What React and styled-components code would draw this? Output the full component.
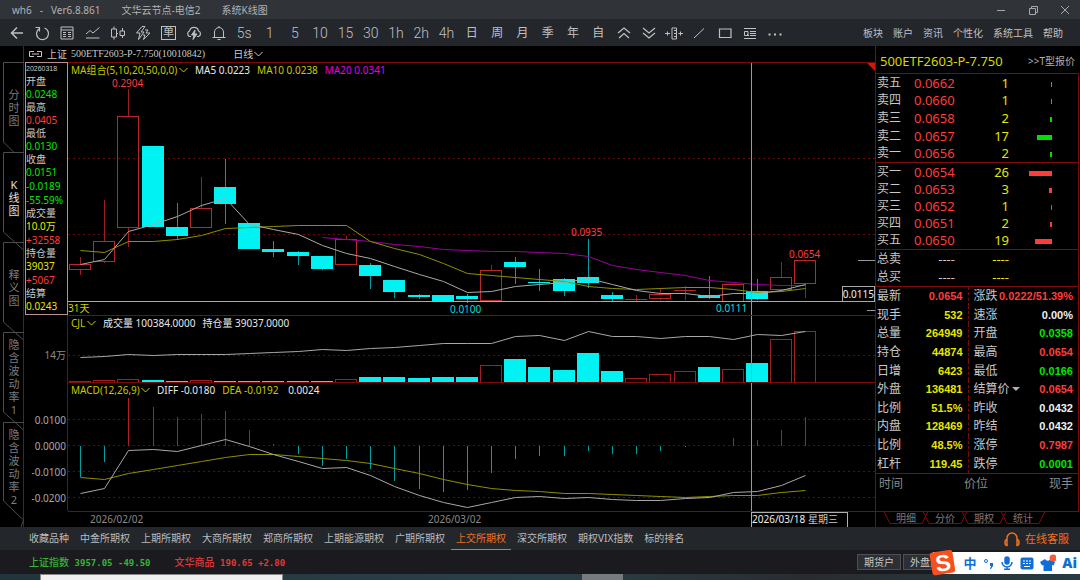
import styled, { createGlobalStyle } from "styled-components"

const c = {
  red: "#ff3c3c",
  line: "#7d0a0a",
  green: "#00e600",
  cyan: "#00f2f2",
  yellow: "#e6e600",
  text: "#c8c8c8",
  dim: "#8a8a8a",
  orange: "#f07020",
  blue: "#0f6fd6",
}

const tools = [
  "back", "refresh", "table", "trend", "candle", "flash", "order", "cloud", "bell",
  "5s", "1", "5", "10", "15", "30", "1h", "2h", "4h",
  "日", "周", "月", "季", "年", "自",
  "up", "down", "adjust", "slash", "rect", "search", "more",
]

const menus = ["板块", "账户", "资讯", "个性化", "系统工具", "帮助"]
const views = ["分时图", "K线图", "释义图", "隐含波动率1", "隐含波动率2"]
const markets = [
  "收藏品种", "中金所期权", "上期所期权", "大商所期权", "郑商所期权", "上期能源期权",
  "广期所期权", "上交所期权", "深交所期权", "期权VIX指数", "标的排名",
]

const dayInfo = [
  ["开盘"], ["0.0248", c.green], ["最高"], ["0.0405", c.red], ["最低"], ["0.0130", c.green],
  ["收盘"], ["0.0151", c.green], ["-0.0189", c.green], ["-55.59%", c.green],
  ["成交量"], ["10.0万", c.yellow], ["+32558", c.red],
  ["持仓量"], ["39037", c.yellow], ["+5067", c.red], ["结算"], ["0.0243", c.yellow],
]

// kind (r = rising, f = falling, t = thin rising), body top, body bottom, high, low
const candles = [
  ["r", 264, 269, 257, 275], ["r", 241, 261, 200, 263], ["r", 116, 227, 89, 247],
  ["f", 146, 227, 146, 227], ["f", 227, 236, 203, 240], ["r", 208, 227, 177, 228],
  ["f", 187, 204, 159, 224], ["f", 223, 249, 223, 249], ["f", 249, 252, 241, 257],
  ["f", 252, 256, 251, 265], ["f", 256, 269, 256, 270], ["r", 239, 264, 236, 264],
  ["f", 265, 276, 263, 289], ["f", 280, 292, 280, 298], ["f", 295, 297, 294, 299],
  ["f", 295, 301, 295, 302], ["f", 296, 299, 294, 303], ["r", 270, 300, 265, 301],
  ["f", 262, 267, 257, 284], ["f", 282, 283, 269, 291], ["f", 279, 291, 278, 296],
  ["f", 277, 283, 239, 288], ["f", 295, 299, 292, 301], ["t", 299, 300, 295, 301],
  ["r", 294, 298, 288, 300], ["t", 290, 291, 286, 300], ["f", 295, 298, 276, 299],
  ["r", 284, 301, 284, 301], ["f", 291, 299, 279, 300], ["r", 277, 289, 262, 292],
  ["r", 260, 283, 260, 298],
]
const ma5 = [264, 259, 231, 224, 216, 205, 198, 224, 229, 234, 245, 253, 258, 266, 274, 281, 292, 291, 286, 284, 282, 278, 284, 290, 293, 293, 296, 293, 293, 290, 284]
const ma10 = [250, 252, 241, 241, 239, 235, 228, 227, 226, 225, 225, 225, 241, 248, 254, 263, 273, 275, 277, 279, 281, 286, 288, 289, 288, 287, 287, 289, 292, 291, 288]
const ma20 = [237, 239, 241, 244, 246, 249, 250, 251, 251, 252, 253, 256, 265, 269, 272, 275, 280, 282, 284, 285, 285]

const volume = [381, 380, 379, 380, 381, 380, 381, 381, 381, 381, 381, 379, 377, 377, 378, 377, 377, 365, 359, 367, 370, 353, 371, 378, 374, 371, 367, 369, 363, 339, 331]
const openInterest = [357, 356, 354, 355, 354, 354, 354, 353, 352, 351, 349, 350, 348, 347, 345, 343, 343, 343, 336, 335, 340, 331, 336, 336, 338, 336, 336, 339, 334, 335, 331]

const macd = [477, 462, 398, 407, 417, 414, 411, 430, 444, 454, 466, 459, 469, 481, 489, 492, 490, 473, 459, 456, 456, 451, 454, 454, 451, 447, 446, 438, 440, 430, 417]
const diff = [493, 488, 450, 449, 451, 445, 439, 446, 454, 461, 468, 467, 475, 486, 495, 502, 507, 502, 497, 496, 498, 497, 499, 500, 500, 498, 497, 492, 491, 485, 475]
const dea = [477, 479, 473, 469, 465, 461, 457, 454, 454, 456, 458, 460, 463, 468, 473, 479, 484, 488, 490, 491, 493, 493, 494, 495, 496, 497, 496, 495, 495, 492, 490]

const asks = [["卖五", "0.0662", 1], ["卖四", "0.0660", 1], ["卖三", "0.0658", 2], ["卖二", "0.0657", 17], ["卖一", "0.0656", 2]]
const bids = [["买一", "0.0654", 26], ["买二", "0.0653", 3], ["买三", "0.0652", 1], ["买四", "0.0651", 2], ["买五", "0.0650", 19]]

const quotes = [
  ["最新", "0.0654", c.red, "涨跌", "0.0222/51.39%", c.red],
  ["现手", "532", c.yellow, "速涨", "0.00%", "#f0f0f0"],
  ["总量", "264949", c.yellow, "开盘", "0.0358", c.green],
  ["持仓", "44874", c.yellow, "最高", "0.0654", c.red],
  ["日增", "6423", c.yellow, "最低", "0.0166", c.green],
  ["外盘", "136481", c.yellow, "结算价", "0.0654", c.red],
  ["比例", "51.5%", c.yellow, "昨收", "0.0432", "#f0f0f0"],
  ["内盘", "128469", c.yellow, "昨结", "0.0432", "#f0f0f0"],
  ["比例", "48.5%", c.yellow, "涨停", "0.7987", c.red],
  ["杠杆", "119.45", c.yellow, "跌停", "0.0001", c.green],
]

const STEP = 24.18
const CURSOR = 683
const cx = (i) => Math.round(12 + i * STEP)
const points = (list, from = 0) => list.map((y, i) => `${cx(i + from) + 0.5},${y + 0.5}`).join(" ")

const toolIcons = {
  back: <path d="M14 8H2.500M8 2.500L2.500 8L8 13.500" strokeWidth="1.500" />,
  refresh: <path d="M5.500 3.500A6 6 0 1 0 10.500 3M1.500 2.500H5.500V6.500" strokeWidth="1.200" />,
  table: <path d="M2 2H14V14H2ZM2 5H14M4 7.500H7M9 7.500H12M4 9.500H7M9 9.500H12M4 11.500H7M9 11.500H12" />,
  trend: <path d="M1 9L5 5.500L8 8L14.500 2.500M1 13H14.500" />,
  candle: <path d="M1.500 4H6.500V12H1.500ZM4 1.500V4M4 12V14.500M10 6H14.500V10.500H10ZM12.500 3V6M12.500 10.500V13M6.500 8.500H8" />,
  flash: <path d="M7 1.500L1.500 8H5L3.500 14.500L9 7H6L10 1.500ZM10 5H13L11 8H15L8.500 14.500L10 10H8" />,
  cloud: (
    <>
      <path d="M5 11.500H3.500A3 3 0 0 1 3.500 6A4.600 4.600 0 0 1 12.500 6A2.900 2.900 0 0 1 12.500 11.500H11" strokeWidth="1.200" />
      <path d="M9 5L5.500 10H8L7 14.500L11 9H8.500Z" fill="currentColor" />
    </>
  ),
  bell: <path d="M3.500 12V7A4.500 4.500 0 0 1 12.500 7V12M1.500 12.500H14.500M6.500 14.500H9.500M8 1V2.500" />,
  up: <path d="M2 8L8 3L14 8M3 13L8 8.500L13 13" strokeWidth="1.200" />,
  down: <path d="M2 3L8 8L14 3M2 8L8 13L14 8" strokeWidth="1.200" />,
  adjust: <path d="M6 3H10.500V14H6ZM8 5.500H10M8 8.500H10M8 11.500H10M-1 8.500H4M12.500 8.500H17M1.500 6.500V10.500M14.500 6.500V10.500" />,
  slash: <path d="M3 13L13 3.500" />,
  rect: <path d="M2.500 4H14V12.500H2.500Z" strokeWidth="1.200" />,
  search: <path d="M2 3.500H14M8 6.500H14M8 8.500H14M8 10.500H14M2 13.500H14M2.500 6.500H6V10.500H2.500ZM5 9L7 11" />,
  more: <path d="M1.500 9.500H3.500M7 9.500H9M12.500 9.500H14.500" strokeWidth="2" />,
}

const Chevron = () => (
  <svg width="9" height="6" viewBox="0 0 9 6" fill="none" stroke="currentColor">
    <path d="M0.500 1L4.500 5L8.500 1" />
  </svg>
)

const DropDown = ({ label, children }) => (
  <StyledDropDown>
    <select aria-label={label}>
      <option>{label}</option>
    </select>
    {children || <Chevron />}
  </StyledDropDown>
)

const Toolbar = () => (
  <StyledToolbar>
    <div className="tools">
      {tools.map((name) => (
        <ToolButton key={name} aria-label={name} $cjk={name > "z"}>
          {name === "order" ? (
            <span className="framed">单</span>
          ) : toolIcons[name] ? (
            <svg width="16" height="16" viewBox="0 0 16 16" fill="none" stroke="currentColor" overflow="visible">
              {toolIcons[name]}
            </svg>
          ) : (
            name
          )}
        </ToolButton>
      ))}
    </div>
    <nav>
      {menus.map((name) => <a href="#menu" key={name}>{name}</a>)}
    </nav>
  </StyledToolbar>
)

const Rail = () => (
  <StyledRail>
    {views.map((name, i) => (
      <RailTab key={name} $active={i === 1} $last={i === 4}>
        <svg width="24" height="110" fill="none" stroke="#4c4c4c">
          <path d={i === 4 ? "M24 0.500H3.500V79L23.500 98L21 105" : i === 0 ? "M24 0.500H3.500V80L14 90.500" : "M24 0.500H3.500V80L23.500 98"} />
        </svg>
        {name.split("").map((ch, n) => <span key={n}>{ch}</span>)}
      </RailTab>
    ))}
  </StyledRail>
)

// y values in the data run from the top of the window, so each plot shifts them by its own start
const Plot = ({ top, height, grid, children }) => (
  <svg width="100%" height={height} shapeRendering="crispEdges">
    <g transform={`translate(0 ${-top})`}>
      {grid.map((y) => (
        <line key={y} x1="0" x2="100%" y1={y + 0.5} y2={y + 0.5} stroke="#6a0808" strokeDasharray="2 3" />
      ))}
      {children}
      <line x1={CURSOR + 0.5} x2={CURSOR + 0.5} y1={top} y2={top + height} stroke="#989898" />
    </g>
  </svg>
)

const Line = ({ data, from, color }) => (
  <polyline points={points(data, from)} fill="none" stroke={color} shapeRendering="auto" />
)

const PricePane = () => (
  <Pane>
    <DayBox>
      <small>20260318</small>
      {dayInfo.map(([text, color], i) => <DayItem key={i} $color={color}>{text}</DayItem>)}
    </DayBox>
    <PlotCell>
      <Legend>
        <b><DropDown label="MA组合(5,10,20,50,0,0)" /></b>
        <LegendItem $color="#e8e8e8">MA5 0.0223</LegendItem>
        <LegendItem $color="#c8c800">MA10 0.0238</LegendItem>
        <LegendItem $color="#e000e0">MA20 0.0341</LegendItem>
      </Legend>
      <Plot top={63} height={252} grid={[158, 234]}>
        {candles.map(([kind, top, bottom, high, low], i) => {
          const color = kind === "f" ? c.cyan : "#b82828"
          const x = cx(i)
          return (
            <g key={i}>
              <path d={`M${x + 0.5} ${high}V${top}M${x + 0.5} ${bottom}V${low}`} stroke={kind === "f" ? "#00a0a0" : "#9a2020"} />
              {kind === "r" ? (
                <rect x={x - 10.5} y={top + 0.5} width="21" height={bottom - top} fill="none" stroke={color} />
              ) : (
                <rect x={x - 11} y={top} width="22" height={Math.max(bottom - top, 1)} fill={color} />
              )}
            </g>
          )
        })}
        <Line data={ma20} from={10} color="#9c009c" />
        <Line data={ma10} color="#8f8f00" />
        <Line data={ma5} color="#a8a8a8" />
        <line x1="0" x2="100%" y1="301.500" y2="301.500" stroke="#a8a8a8" />
        <rect x="100%" y="260" width="17" height="1" transform="translate(-17 0)" fill="#989898" />
        <rect x="100%" y="310" width="8" height="1" transform="translate(-8 0)" fill="#989898" />
        <ChartText x="44" y="87" $color={c.red}>0.2904</ChartText>
        <ChartText x="503" y="236" $color={c.red}>0.0935</ChartText>
        <ChartText x="721" y="258" $color={c.red}>0.0654</ChartText>
        <ChartText x="382" y="313" $color="#00dcdc">0.0100</ChartText>
        <ChartText x="648" y="312" $color="#00dcdc">0.0111</ChartText>
        <ChartText x="0" y="312" $color="#d0d000">31天</ChartText>
      </Plot>
      <Corner />
      <PriceTag>0.0115</PriceTag>
    </PlotCell>
  </Pane>
)

const VolumePane = () => (
  <Pane>
    <Gutter>
      <svg width="43" height="67">
        <ChartText x="42" y="44" textAnchor="end" $color={c.dim}>14万</ChartText>
      </svg>
    </Gutter>
    <PlotCell>
      <Legend>
        <b><DropDown label="CJL" /></b>
        <LegendItem $color="#e8e8e8">成交量 100384.0000</LegendItem>
        <LegendItem $color="#e8e8e8">持仓量 39037.0000</LegendItem>
      </Legend>
      <Plot top={316} height={66} grid={[355]}>
        {volume.map((y, i) => (
          candles[i][0] === "f"
            ? <rect key={i} x={cx(i) - 11} y={y} width="22" height={382 - y} fill={c.cyan} />
            : <rect key={i} x={cx(i) - 10.5} y={y + 0.5} width="21" height={383 - y} fill="none" stroke="#a02020" />
        ))}
        <Line data={openInterest} color="#a8a8a8" />
      </Plot>
    </PlotCell>
  </Pane>
)

const MacdPane = () => (
  <Pane>
    <Gutter>
      <svg width="43" height="129">
        {["0.0100", "0.0000", "-0.0100", "-0.0200"].map((text, i) => (
          <ChartText key={text} x="42" y={42 + i * 26} textAnchor="end" $color="#a8a8a8">{text}</ChartText>
        ))}
      </svg>
    </Gutter>
    <PlotCell>
      <Legend>
        <b><DropDown label="MACD(12,26,9)" /></b>
        <LegendItem $color="#e8e8e8">DIFF -0.0180</LegendItem>
        <LegendItem $color="#c8c800">DEA -0.0192</LegendItem>
        <LegendItem $color="#e8e8e8">&nbsp;0.0024</LegendItem>
      </Legend>
      <Plot top={383} height={128} grid={[419, 445, 471, 497]}>
        {macd.map((y, i) => (
          <line key={i} x1={cx(i) + 0.5} x2={cx(i) + 0.5} y1="446" y2={y} stroke={y > 446 ? "#00a0a0" : "#b02020"} />
        ))}
        <Line data={dea} color="#8f8f00" />
        <Line data={diff} color="#a8a8a8" />
      </Plot>
    </PlotCell>
  </Pane>
)

const DateAxis = () => (
  <Pane>
    <AxisGap />
    <PlotCell>
      <svg width="100%" height="15" shapeRendering="crispEdges">
        <ChartText x="22" y="11" $color={c.dim}>2026/02/02</ChartText>
        <ChartText x="360" y="11" $color={c.dim}>2026/03/02</ChartText>
        <path d={`M${CURSOR + 0.5} 15V0H${CURSOR + 96}V15`} fill="none" stroke="#b0b0b0" />
        <ChartText x={CURSOR + 1} y="11" $color="#f0f0f0">2026/03/18</ChartText>
        <ChartText x={CURSOR + 57} y="11" $color={c.text}>星期三</ChartText>
      </svg>
    </PlotCell>
  </Pane>
)

const OrderTable = ({ rows, color, height }) => (
  <Orders $height={height}>
    <tbody>
      {rows.map(([name, price, amount]) => (
        <tr key={name}>
          <th scope="row">{name}</th>
          <td className="price">{price}</td>
          <td className="amount">{amount}</td>
          <td className="depth"><Depth $color={color} style={{ width: Math.max(1, Math.round(amount * 0.88)) }} /></td>
        </tr>
      ))}
    </tbody>
  </Orders>
)

const QuotePanel = () => (
  <StyledQuotePanel>
    <QuoteTitle>
      <h1>500ETF2603-P-7.750</h1>
      <a href="#t-quote">&gt;&gt;T型报价</a>
    </QuoteTitle>
    <QuoteBody>
      <OrderTable rows={asks} color="#00e000" height="89px" />
      <OrderTable rows={bids} color={c.red} height="87px" />
      <Orders $height="37px">
        <tbody>
          {["总卖", "总买"].map((name) => (
            <tr key={name}>
              <th scope="row">{name}</th>
              <td className="total">----</td>
              <td className="amount">----</td>
              <td className="depth" />
            </tr>
          ))}
        </tbody>
      </Orders>
      <Details>
        <tbody>
          {quotes.map(([a, av, ac, b, bv, bc], i) => (
            <tr key={i}>
              <th scope="row">{a}</th>
              <Value $color={ac} $split>{av}</Value>
              <th scope="row" className="second">
                {b === "结算价" ? (
                  <DropDown label={b}>
                    <svg width="8" height="5"><path d="M0 0H8L4 4Z" fill="#b0b0b0" /></svg>
                  </DropDown>
                ) : b}
              </th>
              <Value $color={bc}>{bv}</Value>
            </tr>
          ))}
        </tbody>
      </Details>
      <DealHead>
        <span>时间</span>
        <span>价位</span>
        <span>现手</span>
      </DealHead>
    </QuoteBody>
    <DealTabs>
      {["明细", "分价", "期权", "统计"].map((name) => (
        <button key={name}>
          <svg width="44" height="13" fill="none" stroke={c.line}>
            <path d="M0 0.500L6 12.500H38L44 0.500" />
          </svg>
          {name}
        </button>
      ))}
    </DealTabs>
  </StyledQuotePanel>
)

const ImeBar = () => (
  <StyledImeBar>
    <svg className="logo" width="28" height="26" viewBox="0 0 28 26">
      <rect x="2" y="1" width="23" height="23" rx="3" fill="#f4511e" transform="rotate(-9 14 13)" />
      <text x="14" y="21" textAnchor="middle" transform="rotate(-9 14 13)" fill="#fff">S</text>
    </svg>
    <span>中</span>
    <svg width="12" height="12" viewBox="0 0 12 12">
      <circle cx="3" cy="4" r="1.500" fill="none" stroke={c.blue} />
      <path d="M7 6H10V9L8 12H7L8 9H7Z" fill={c.blue} />
    </svg>
    <svg width="12" height="14" viewBox="0 0 12 14" fill="none" stroke={c.blue} strokeWidth="1.500">
      <rect x="4" y="1" width="4" height="7" rx="2" fill={c.blue} />
      <path d="M1 6A5 5 0 0 0 11 6M6 11V13.500M3 13.300H9" />
    </svg>
    <svg width="14" height="13" viewBox="0 0 14 13">
      <rect x="0.500" y="0.500" width="13" height="12" rx="2" fill={c.blue} />
      <path d="M3 4H5M6 4H8M9 4H11M3 6.500H5M6 6.500H8M9 6.500H11M4 9.500H10" stroke="#fff" />
    </svg>
    <svg width="16" height="18" viewBox="0 0 16 18">
      <path d="M5 5L0 8L2 11.500L3.500 11V17H12V11L13.500 11.500L15 8L10.500 5A3 3 0 0 1 5 5Z" fill={c.blue} />
      <circle cx="13" cy="4" r="3.500" fill="#ff5a36" />
    </svg>
    <b>Ai</b>
  </StyledImeBar>
)

export default function App() {
  return (
    <Page>
      <GlobalStyle />
      <TitleBar>
        <div className="version">
          <span>wh6</span>
          <span>-</span>
          <span>Ver6.8.861</span>
        </div>
        <span>文华云节点-电信2</span>
        <span>系统K线图</span>
        <div className="controls">
          <button aria-label="最小化"><svg width="10" height="10"><path d="M1 5.500H9" /></svg></button>
          <button aria-label="还原"><svg width="10" height="10"><path d="M1.500 3.500H7.500V9.500H1.500ZM3.500 3.500V1.500H9.500V7.500H7.500" /></svg></button>
          <button aria-label="关闭"><svg width="10" height="10"><path d="M1 1L9 9M9 1L1 9" /></svg></button>
        </div>
      </TitleBar>
      <Toolbar />
      <Main>
        <Rail />
        <ChartArea>
          <SymbolBar>
            <svg width="15" height="8" fill="none" stroke="currentColor">
              <path d="M6 1.500H1.500V6.500H6M9 1.500H13.500V6.500H9M4 4H11" />
            </svg>
            <span>上证</span>
            <span className="code">500ETF2603-P-7.750(10010842)</span>
            <DropDown label="日线" />
          </SymbolBar>
          <PricePane />
          <VolumePane />
          <MacdPane />
          <DateAxis />
        </ChartArea>
        <QuotePanel />
      </Main>
      <MarketBar>
        {markets.map((name) => <MarketTab key={name} $active={name === "上交所期权"}>{name}</MarketTab>)}
        <a href="#service">
          <svg width="18" height="16" viewBox="0 0 18 16" fill="none" stroke="currentColor" strokeWidth="1.500">
            <path d="M4 9V7A5 5 0 0 1 14 7V9M4 8.500A2 3 0 1 0 4 14.500ZM14 8.500A2 3 0 1 1 14 14.500Z" />
          </svg>
          在线客服
        </a>
      </MarketBar>
      <IndexBar>
        <IndexItem $color="#36b436">上证指数 <b>3957.05 -49.50</b></IndexItem>
        <IndexItem $color="#e03838">文华商品 <b>190.65 +2.80</b></IndexItem>
        <div className="accounts">
          <button>期货户</button>
          <button>外盘户</button>
        </div>
        <ImeBar />
      </IndexBar>
      <Desktop>
        <div className="window" />
        <div className="task" />
      </Desktop>
    </Page>
  )
}

const GlobalStyle = createGlobalStyle`
  body {
    margin: 0;
    background: #000;
  }
  * {
    box-sizing: border-box;
  }
  button, select {
    margin: 0;
    padding: 0;
    border: 0;
    background: none;
    color: inherit;
    font: inherit;
    appearance: none;
  }
  a {
    color: inherit;
    text-decoration: none;
  }
  svg {
    display: block;
    flex: none;
  }
`

const Page = styled.div`
  min-height: 100vh;
  display: flex;
  flex-direction: column;
  overflow: hidden;
  background: #000;
  color: ${c.text};
  font: 10px/14px "Noto Sans", "Noto Sans CJK SC", sans-serif;
  white-space: nowrap;
`

const TitleBar = styled.header`
  height: 19px;
  display: flex;
  align-items: center;
  gap: 21px;
  padding-left: 12px;
  background: #303338;
  color: #b0b2b4;

  .version {
    display: flex;
    gap: 8px;
  }
  .controls {
    margin-left: auto;
    display: flex;
    padding-right: 10px;
    gap: 22px;
  }
  svg {
    fill: none;
    stroke: #a8a8a8;
  }
`

const StyledToolbar = styled.div`
  height: 27px;
  display: flex;
  align-items: center;
  padding: 0 17px 0 4px;
  background: #23262b;

  .tools {
    flex: 0 1 784px;
    display: grid;
    grid-template-columns: repeat(31, 1fr);
    align-items: center;
  }
  nav {
    margin-left: auto;
    display: flex;
    gap: 10px;
    color: #c0c0c0;
  }
`

const ToolButton = styled.button`
  display: flex;
  justify-content: center;
  align-items: center;
  height: 27px;
  color: #c0c0c0;
  font-family: Roboto, "Noto Sans CJK SC", sans-serif;
  font-weight: ${({ $cjk }) => ($cjk ? "400" : "300")};
  font-size: ${({ $cjk }) => ($cjk ? "12px" : "14px")};

  .framed {
    border: 1px solid #c0c0c0;
    font-size: 11px;
    font-weight: 400;
    line-height: 12px;
    padding: 0 1px;
  }
`

const Main = styled.main`
  display: flex;
`

const StyledRail = styled.div`
  flex: none;
  width: 24px;
  padding-top: 16px;
  border-right: 1px solid #303030;
`

const RailTab = styled.button`
  position: relative;
  display: flex;
  flex-direction: column;
  align-items: center;
  justify-content: center;
  width: 24px;
  height: ${({ $last }) => ($last ? "105px" : "90px")};
  padding: ${({ $last }) => ($last ? "0 0 16px 4px" : "0 0 0 4px")};
  color: ${({ $active }) => ($active ? "#e0e0e0" : "#7c7c7c")};
  font-size: 11px;
  line-height: 13px;

  svg {
    position: absolute;
    left: 0;
    top: 0;
  }
`

const ChartArea = styled.section`
  flex: 1;
  min-width: 0;
`

const SymbolBar = styled.div`
  height: 16px;
  display: flex;
  align-items: center;
  gap: 4px;
  padding-left: 4px;

  .code {
    font-family: "Liberation Serif", serif;
    margin-right: 24px;
  }
`

const StyledDropDown = styled.span`
  display: inline-flex;
  align-items: center;
  gap: 1px;
`

const Pane = styled.div`
  display: flex;
`

const Gutter = styled.div`
  flex: none;
  width: 44px;
  border-right: 1px solid ${c.line};
`

const AxisGap = styled.div`
  flex: none;
  width: 44px;
`

const DayBox = styled.div`
  flex: none;
  width: 43px;
  margin-left: 1px;
  border: 1px solid #b89090;
  display: flex;
  flex-direction: column;

  small {
    font: 7px/12px "Liberation Sans", sans-serif;
  }
`

const DayItem = styled.span`
  line-height: ${({ $color }) => ($color ? "14px" : "12px")};
  color: ${({ $color }) => $color || c.text};
`

const PlotCell = styled.div`
  position: relative;
  flex: 1;
  min-width: 0;
  border-top: 1px solid ${c.line};
`

const Legend = styled.div`
  position: absolute;
  left: 3px;
  top: 0;
  display: flex;
  gap: 7px;

  b {
    color: #c8c800;
    font-weight: 400;
  }
`

const LegendItem = styled.span`
  color: ${({ $color }) => $color};
`

const ChartText = styled.text`
  font-size: 10px;
  fill: ${({ $color }) => $color};
`

const Corner = styled.i`
  position: absolute;
  top: 0;
  right: 0;
  border: 4px solid #d01808;
  border-left-color: transparent;
  border-bottom-color: transparent;
`

const PriceTag = styled.span`
  position: absolute;
  right: 0;
  bottom: 13px;
  border: 1px solid #a8a8a8;
  background: #000;
  color: #f0f0f0;
`

const StyledQuotePanel = styled.aside`
  flex: none;
  width: 205px;
  padding-right: 1px;
  border-left: 1px solid ${c.line};
`

const QuoteTitle = styled.div`
  height: 27px;
  padding: 2px 4px 0;
  display: flex;
  align-items: center;
  justify-content: space-between;

  h1 {
    margin: 0;
    color: #d8d800;
    font-size: 13px;
    font-weight: 400;
  }
  a {
    color: #b0b0b0;
  }
`

const QuoteBody = styled.div`
  border: 1px solid ${c.line};
  border-left: 0;
`

const Orders = styled.table`
  width: 100%;
  height: ${({ $height }) => $height};
  border-collapse: collapse;
  table-layout: fixed;
  border-bottom: 1px solid ${c.line};
  font-size: 13px;

  th, td {
    padding: 0;
    line-height: 16px;
  }
  th {
    width: 38px;
    padding-left: 1px;
    text-align: left;
    font-size: 12px;
    font-weight: 400;
  }
  .price {
    width: 41px;
    color: ${c.red};
  }
  .total {
    width: 41px;
    text-align: right;
  }
  .amount {
    width: 54px;
    color: ${c.yellow};
    text-align: right;
  }
  .depth {
    padding-right: 26px;
  }
`

const Depth = styled.div`
  height: 5px;
  margin: 3px 0 0 auto;
  background: ${({ $color }) => $color};
`

const Details = styled.table`
  width: 100%;
  height: 187px;
  border-collapse: collapse;
  table-layout: fixed;
  border-bottom: 1px solid ${c.line};
  font-size: 12px;

  th {
    width: 28px;
    padding: 0 0 0 1px;
    line-height: 16px;
    text-align: left;
    font-weight: 400;
  }
  .second {
    padding-left: 5px;
  }
`

const Value = styled.td`
  width: ${({ $split }) => ($split ? "64px" : "auto")};
  padding: 0 5px 0 0;
  border-right: ${({ $split }) => ($split ? "1px dashed #7d0a0a" : "0")};
  color: ${({ $color }) => $color};
  font: bold 11px/16px "Liberation Sans", sans-serif;
  text-align: right;
`

const DealHead = styled.div`
  height: 37px;
  padding: 3px 5px 0 3px;
  display: flex;
  justify-content: space-between;
  color: ${c.dim};
  font-size: 12px;
`

const DealTabs = styled.div`
  display: flex;
  padding-left: 8px;
  margin-top: -1px;

  button {
    position: relative;
    width: 39px;
    height: 14px;
    padding-left: 5px;
    color: #8a7474;
  }
  svg {
    position: absolute;
    left: 0;
    top: 0;
  }
`

const MarketBar = styled.nav`
  height: 23px;
  display: flex;
  gap: 1px;
  padding: 0 11px 0 24px;
  background: #23262b;

  a {
    margin-left: auto;
    display: flex;
    align-items: center;
    gap: 4px;
    color: ${c.orange};
    font-size: 11px;
  }
`

const MarketTab = styled.button`
  padding: 0 5px;
  border-bottom: 1px solid ${({ $active }) => ($active ? c.orange : "transparent")};
  color: ${({ $active }) => ($active ? c.orange : "#bcbcbc")};
`

const IndexBar = styled.footer`
  position: relative;
  height: 24px;
  display: flex;
  align-items: center;
  gap: 24px;
  padding: 0 133px 0 29px;
  background: #1a1a1f;

  .accounts {
    margin-left: auto;
    display: flex;
    gap: 2px;
  }
  .accounts button {
    width: 44px;
    height: 16px;
    border: 1px solid #4c4f54;
    background: #2c2f34;
    line-height: 14px;
  }
`

const IndexItem = styled.span`
  color: ${({ $color }) => $color};
  font-weight: 500;

  b {
    margin-left: 3px;
    font-family: "DejaVu Sans Mono", monospace;
    font-size: 9px;
  }
`

const StyledImeBar = styled.div`
  position: absolute;
  right: 0;
  top: 2px;
  width: 147px;
  height: 22px;
  display: flex;
  align-items: center;
  justify-content: space-between;
  padding: 0 3px 0 0;
  background: #fff;
  color: ${c.blue};
  font-size: 13px;
  font-weight: 700;

  .logo {
    margin-left: -4px;
  }
  .logo text {
    font: bold 23px "Liberation Sans", sans-serif;
  }
  b {
    font-size: 14px;
  }
`

const Desktop = styled.div`
  flex: 1;
  min-height: 6px;
  display: flex;
  padding-left: 40px;
  background: linear-gradient(90deg, #22343c, #2a4048 50%, #282c30 75%, #263c42);

  .window {
    width: 243px;
    background: #f0f0f0;
    border: 1px solid #888;
    border-bottom: 0;
  }
  .task {
    width: 41px;
    margin-left: 299px;
    background: #747c80;
  }
`
